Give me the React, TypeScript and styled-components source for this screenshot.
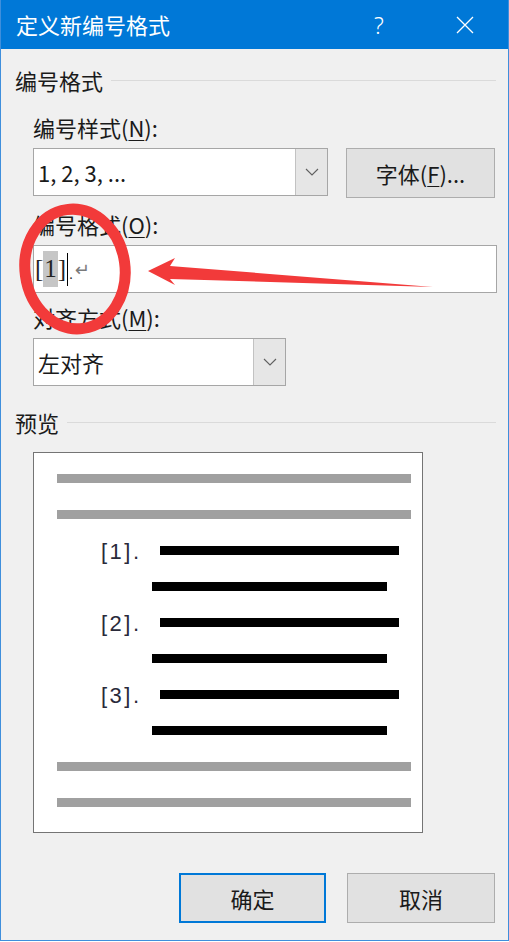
import React from "react";
import styled, { createGlobalStyle } from "styled-components";

const Global = createGlobalStyle`
  html, body { margin: 0; padding: 0; background: #ffffff; }
  body { font-family: "Noto Sans CJK SC", "Noto Sans", sans-serif; color: #1a1a1a; }
`;

const Window = styled.div`
  position: relative;
  width: 509px;
  height: 941px;
  box-sizing: border-box;
  background: #f0f0f0;
  border: 1px solid #3f8fdc;
  border-top: none;
  display: flex;
  flex-direction: column;
  overflow: hidden;
`;

const TitleBar = styled.div`
  height: 49px;
  margin: 0 -1px;
  background: #0078d7;
  color: #ffffff;
  display: flex;
  align-items: center;
  flex-shrink: 0;
`;

const Title = styled.div`
  flex: 1;
  padding-left: 16px;
  font-size: 22px;
  line-height: 1;
  margin-top: -2px;
`;

const CaptionButton = styled.div<{ $w: number }>`
  width: ${(p) => p.$w}px;
  height: 49px;
  display: flex;
  align-items: center;
  justify-content: center;
  font-family: "Noto Sans", sans-serif;
  font-weight: 300;
  font-size: 23px;
`;

const Body = styled.div`
  display: flex;
  flex-direction: column;
  padding: 0 12px 0 14px;
`;

const Heading = styled.div<{ $mt: number }>`
  margin-top: ${(p) => p.$mt}px;
  height: 26px;
  display: flex;
  align-items: center;
  gap: 8px;
  font-size: 22px;
`;

const Rule = styled.div`
  flex: 1;
  height: 1px;
  background: #dadada;
`;

const Indent = styled.div`
  display: flex;
  flex-direction: column;
  padding-left: 18px;
`;

const Label = styled.div<{ $mt: number }>`
  margin-top: ${(p) => p.$mt}px;
  height: 26px;
  display: flex;
  align-items: center;
  font-size: 22px;
  u { text-decoration-thickness: 1px; text-underline-offset: 3px; }
`;

const Row = styled.div<{ $mt: number }>`
  margin-top: ${(p) => p.$mt}px;
  display: flex;
  align-items: flex-start;
  gap: 18px;
`;

const Combo = styled.div<{ $w: number; $mt?: number }>`
  margin-top: ${(p) => p.$mt ?? 0}px;
  width: ${(p) => p.$w}px;
  height: 48px;
  box-sizing: border-box;
  border: 1px solid #a6a6a6;
  background: #ffffff;
  display: flex;
`;

const ComboValue = styled.div`
  flex: 1;
  display: flex;
  align-items: center;
  padding-left: 4px;
  font-size: 22px;
`;

const DropPart = styled.div`
  width: 31px;
  background: #e6e6e6;
  border-left: 1px solid #c2c2c2;
  display: flex;
  align-items: center;
  justify-content: center;
`;

const Button = styled.div<{ $w: number; $primary?: boolean }>`
  width: ${(p) => p.$w}px;
  height: 50px;
  box-sizing: border-box;
  background: #e1e1e1;
  border: ${(p) => (p.$primary ? "2px solid #0078d7" : "1px solid #adadad")};
  display: flex;
  align-items: center;
  justify-content: center;
  font-size: 22px;
  u { text-decoration-thickness: 1px; text-underline-offset: 3px; }
`;

const TextBox = styled.div<{ $mt: number }>`
  margin-top: ${(p) => p.$mt}px;
  width: 464px;
  height: 48px;
  box-sizing: border-box;
  border: 1px solid #a6a6a6;
  background: #ffffff;
  display: flex;
  align-items: center;
  padding-left: 1px;
  font-family: "Liberation Serif", serif;
  font-size: 25px;
  color: #222;
`;

const Highlight = styled.span`
  background: #c6c6c6;
  padding: 4px 1px;
`;

const Caret = styled.span`
  display: inline-block;
  width: 1px;
  height: 33px;
  background: #000;
  margin: 0 1px 0 1px;
`;

const Dot = styled.span`
  align-self: flex-end;
  margin-bottom: 9px;
  font-size: 14px;
`;

const Return = styled.span`
  font-family: "DejaVu Sans", sans-serif;
  font-size: 18px;
  color: #7a7a7a;
  margin-left: 2px;
  margin-top: 1px;
`;

const Preview = styled.div<{ $mt: number }>`
  margin-top: ${(p) => p.$mt}px;
  width: 390px;
  height: 381px;
  box-sizing: border-box;
  border: 1px solid #747474;
  background: #ffffff;
  padding-top: 21px;
  display: flex;
  flex-direction: column;
  gap: 27px;
`;

const Bar = styled.div<{ $left: number; $w: number; $grey?: boolean }>`
  margin-left: ${(p) => p.$left}px;
  width: ${(p) => p.$w}px;
  height: 9px;
  background: ${(p) => (p.$grey ? "#a0a0a0" : "#000000")};
  flex-shrink: 0;
`;

const NumberRow = styled.div`
  height: 9px;
  display: flex;
  align-items: center;
  padding-left: 67px;
`;

const NumberLabel = styled.div`
  width: 59px;
  font-family: "Liberation Sans", sans-serif;
  font-size: 22px;
  letter-spacing: 2.5px;
  color: #2a2a3a;
  line-height: 9px;
  margin-top: 1px;
`;

const Footer = styled.div`
  margin-top: 40px;
  display: flex;
  justify-content: flex-end;
  gap: 21px;
  padding-right: 1px;
`;

const Overlay = styled.svg`
  position: absolute;
  top: 0;
  left: 0;
  pointer-events: none;
`;

const Chevron = () => (
  <svg width="14" height="8" viewBox="0 0 14 8">
    <polyline points="1,1 7,7 13,1" fill="none" stroke="#5f5f5f" strokeWidth="1.1" />
  </svg>
);

const items = ["[1].", "[2].", "[3]."];

export default function App() {
  return (
    <>
      <Global />
      <Window>
        <TitleBar>
          <Title>定义新编号格式</Title>
          <CaptionButton $w={46}>?</CaptionButton>
          <CaptionButton $w={40} />
          <CaptionButton $w={46}>
            <svg width="18" height="18" viewBox="0 0 18 18">
              <path d="M1 1 L17 17 M17 1 L1 17" stroke="#fff" strokeWidth="1.3" fill="none" />
            </svg>
          </CaptionButton>
          <CaptionButton $w={21} />
        </TitleBar>
        <Body>
          <Heading $mt={18}>
            编号格式
            <Rule />
          </Heading>
          <Indent>
            <Label $mt={21}>
              编号样式(<u>N</u>):
            </Label>
            <Row $mt={8}>
              <Combo $w={295}>
                <ComboValue>1, 2, 3, ...</ComboValue>
                <DropPart>
                  <Chevron />
                </DropPart>
              </Combo>
              <Button $w={149}>
                字体(<u>F</u>)...
              </Button>
            </Row>
            <Label $mt={13}>
              编号格式(<u>O</u>):
            </Label>
            <TextBox $mt={8}>
              [<Highlight>1</Highlight>]<Caret />
              <Dot>.</Dot>
              <Return>↵</Return>
            </TextBox>
            <Label $mt={11}>
              对齐方式(<u>M</u>):
            </Label>
            <Combo $w={253} $mt={8}>
              <ComboValue>左对齐</ComboValue>
              <DropPart>
                <Chevron />
              </DropPart>
            </Combo>
          </Indent>
          <Heading $mt={23}>
            预览
            <Rule />
          </Heading>
          <Indent>
            <Preview $mt={17}>
              <Bar $grey $left={23} $w={354} />
              <Bar $grey $left={23} $w={354} />
              {items.map((t) => (
                <React.Fragment key={t}>
                  <NumberRow>
                    <NumberLabel>{t}</NumberLabel>
                    <Bar $left={0} $w={239} />
                  </NumberRow>
                  <Bar $left={118} $w={235} />
                </React.Fragment>
              ))}
              <Bar $grey $left={23} $w={354} />
              <Bar $grey $left={23} $w={354} />
            </Preview>
          </Indent>
          <Footer>
            <Button $w={147} $primary>
              确定
            </Button>
            <Button $w={148}>取消</Button>
          </Footer>
        </Body>
        <Overlay width="509" height="942" viewBox="0 0 509 942">
          <ellipse
            cx="74"
            cy="269"
            rx="50"
            ry="60"
            transform="rotate(-8 74 269)"
            fill="none"
            stroke="#f23a3a"
            strokeWidth="11"
          />
          <path
            d="M147 271 L174 258 L169 266 L432 287 L169 279 L174 285 Z"
            fill="#f23a3a"
          />
        </Overlay>
      </Window>
    </>
  );
}
